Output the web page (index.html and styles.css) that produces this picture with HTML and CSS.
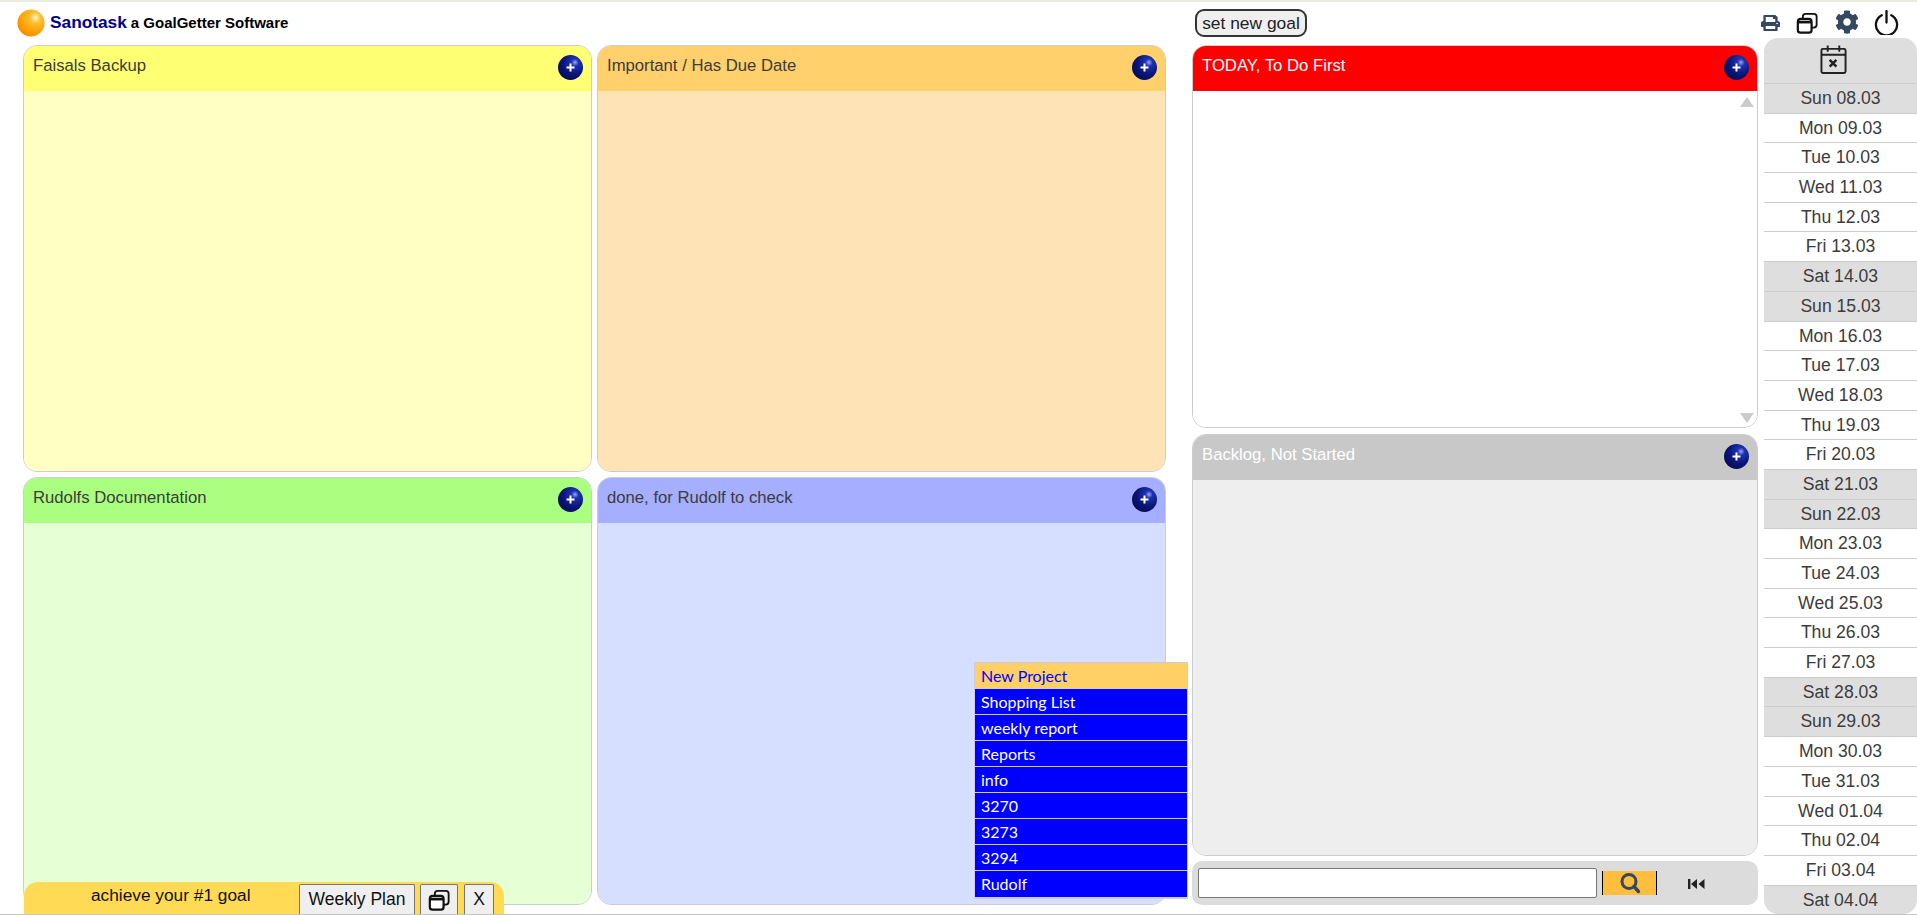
FILE: index.html
```html
<!DOCTYPE html>
<html lang="en">
<head>
<meta charset="utf-8">
<title>Sanotask</title>
<link rel="stylesheet" href="styles.css">
</head>
<body>
<svg class="defs" width="0" height="0" aria-hidden="true">
  <defs>
    <radialGradient id="ball" cx="0.68" cy="0.3" r="0.8">
      <stop offset="0" stop-color="#9aa8ff"/>
      <stop offset="0.18" stop-color="#1f33b0"/>
      <stop offset="0.6" stop-color="#0a1478"/>
      <stop offset="1" stop-color="#050c50"/>
    </radialGradient>
    <radialGradient id="sun" cx="0.66" cy="0.3" r="0.8">
      <stop offset="0" stop-color="#fff6cc"/>
      <stop offset="0.25" stop-color="#ffc030"/>
      <stop offset="0.75" stop-color="#ff9a00"/>
      <stop offset="1" stop-color="#ee8500"/>
    </radialGradient>
    <symbol id="add" viewBox="0 0 25 25">
      <circle cx="12.5" cy="12.5" r="12.5" fill="url(#ball)"/>
      <path d="M12.5 8.5v8M8.5 12.5h8" stroke="#fff" stroke-width="2"/>
    </symbol>
    <symbol id="restore" viewBox="0 0 24 24">
      <rect x="7.5" y="2" width="15" height="15" rx="3" fill="none" stroke="#111" stroke-width="2"/>
      <rect x="2" y="7.5" width="15" height="15" rx="3" fill="#fff" stroke="#111" stroke-width="2.4"/>
      <path d="M2 11h15" stroke="#111" stroke-width="3"/>
    </symbol>
  </defs>
</svg>

<header class="topbar">
  <div class="brand">
    <svg class="logo" viewBox="0 0 30 30"><circle cx="15" cy="15" r="14.5" fill="url(#sun)"/></svg>
    <div class="brand-text">
      <span class="brand-name">Sanotask</span>
      <span class="brand-tag">a GoalGetter Software</span>
    </div>
  </div>
  <button class="goal-btn">set new goal</button>
  <div class="tools">
    <svg class="tool-print" viewBox="0 0 512 512" preserveAspectRatio="none"><path fill="#34495e" d="M448 192V77.25c0-8.49-3.37-16.62-9.37-22.63L393.37 9.37c-6-6-14.14-9.37-22.63-9.37H96C78.33 0 64 14.33 64 32v160c-35.35 0-64 28.65-64 64v112c0 8.84 7.16 16 16 16h48v96c0 17.67 14.33 32 32 32h320c17.67 0 32-14.33 32-32v-96h48c8.84 0 16-7.16 16-16V256c0-35.35-28.65-64-64-64zm-64 256H128v-96h256v96zm0-224H128V64h192v48c0 8.84 7.16 16 16 16h48v96zm48 72c-13.25 0-24-10.75-24-24 0-13.26 10.75-24 24-24s24 10.74 24 24c0 13.25-10.75 24-24 24z"/></svg>
    <svg class="tool-restore"><use href="#restore"/></svg>
    <svg class="tool-gear" viewBox="0 0 512 512"><path fill="#34495e" d="M487.4 315.7l-42.6-24.6c4.3-23.2 4.3-47 0-70.2l42.6-24.6c4.9-2.8 7.1-8.6 5.5-14-11.1-35.6-30-67.8-54.7-94.6-3.8-4.1-10-5.1-14.8-2.3L380.8 110c-17.9-15.4-38.5-27.3-60.8-35.1V25.8c0-5.6-3.9-10.5-9.4-11.7-36.7-8.2-74.3-7.8-109.2 0-5.5 1.2-9.4 6.1-9.4 11.7V75c-22.2 7.9-42.8 19.8-60.8 35.1L88.7 85.5c-4.9-2.8-11-1.9-14.8 2.3-24.7 26.7-43.6 58.9-54.7 94.6-1.7 5.4.6 11.2 5.5 14L67.3 221c-4.3 23.2-4.3 47 0 70.2l-42.6 24.6c-4.9 2.8-7.1 8.6-5.5 14 11.1 35.6 30 67.8 54.7 94.6 3.8 4.1 10 5.1 14.8 2.3l42.6-24.6c17.9 15.4 38.5 27.3 60.8 35.1v49.2c0 5.6 3.9 10.5 9.4 11.7 36.7 8.2 74.3 7.8 109.2 0 5.5-1.2 9.4-6.1 9.4-11.7v-49.2c22.2-7.9 42.8-19.8 60.8-35.1l42.6 24.6c4.9 2.8 11 1.9 14.8-2.3 24.7-26.7 43.6-58.9 54.7-94.6 1.5-5.5-.7-11.3-5.6-14.1zM256 336c-44.1 0-80-35.9-80-80s35.9-80 80-80 80 35.9 80 80-35.9 80-80 80z"/></svg>
    <svg class="tool-power" viewBox="0 0 26 26"><path d="M8 5.5a11 11 0 1 0 10 0M13 1v12" fill="none" stroke="#111" stroke-width="2.4" stroke-linecap="round"/></svg>
  </div>
</header>

<main class="content">
  <section class="board">
    <article class="panel yellow"><div class="panel-head"><span>Faisals Backup</span><svg class="add"><use href="#add"/></svg></div><div class="panel-body"></div></article>
    <article class="panel orange"><div class="panel-head"><span>Important / Has Due Date</span><svg class="add"><use href="#add"/></svg></div><div class="panel-body"></div></article>
    <article class="panel green"><div class="panel-head"><span>Rudolfs Documentation</span><svg class="add"><use href="#add"/></svg></div><div class="panel-body"></div></article>
    <article class="panel blue"><div class="panel-head"><span>done, for Rudolf to check</span><svg class="add"><use href="#add"/></svg></div><div class="panel-body"></div></article>
  </section>

  <section class="side">
    <article class="panel red today"><div class="panel-head"><span>TODAY, To Do First</span><svg class="add"><use href="#add"/></svg></div><div class="panel-body"><i class="arrow up"></i><i class="arrow down"></i></div></article>
    <article class="panel gray backlog"><div class="panel-head"><span>Backlog, Not Started</span><svg class="add"><use href="#add"/></svg></div><div class="panel-body"></div></article>
    <div class="search">
      <input class="search-input" type="text" aria-label="Search">
      <button class="search-btn" aria-label="Search">
        <svg viewBox="0 0 22 22"><circle cx="10" cy="9.500" r="7" fill="none" stroke="#34495e" stroke-width="3"/><path d="M15 14.500l4.500 5" stroke="#34495e" stroke-width="3.400" stroke-linecap="round"/></svg>
      </button>
      <svg class="rewind" viewBox="0 0 17 10"><path fill="#222" d="M0 0h2.400v10H0zM9 0v10L3 5zM16.500 0v10l-6-5z"/></svg>
    </div>
  </section>

  <aside class="calendar">
    <div class="cal-head">
      <svg viewBox="0 0 28 30"><rect x="1.500" y="4" width="25" height="25" rx="1.500" fill="none" stroke="#222" stroke-width="2"/><path d="M1.500 10h25M8 0.500v6.500M20 0.500v6.500" stroke="#222" stroke-width="2" fill="none"/><path d="M10 15.500l7 7M17 15.500l-7 7" stroke="#222" stroke-width="2.600"/></svg>
    </div>
    <div class="day off">Sun 08.03</div>
    <div class="day">Mon 09.03</div>
    <div class="day">Tue 10.03</div>
    <div class="day">Wed 11.03</div>
    <div class="day">Thu 12.03</div>
    <div class="day">Fri 13.03</div>
    <div class="day off">Sat 14.03</div>
    <div class="day off">Sun 15.03</div>
    <div class="day">Mon 16.03</div>
    <div class="day">Tue 17.03</div>
    <div class="day">Wed 18.03</div>
    <div class="day">Thu 19.03</div>
    <div class="day">Fri 20.03</div>
    <div class="day off">Sat 21.03</div>
    <div class="day off">Sun 22.03</div>
    <div class="day">Mon 23.03</div>
    <div class="day">Tue 24.03</div>
    <div class="day">Wed 25.03</div>
    <div class="day">Thu 26.03</div>
    <div class="day">Fri 27.03</div>
    <div class="day off">Sat 28.03</div>
    <div class="day off">Sun 29.03</div>
    <div class="day">Mon 30.03</div>
    <div class="day">Tue 31.03</div>
    <div class="day">Wed 01.04</div>
    <div class="day">Thu 02.04</div>
    <div class="day">Fri 03.04</div>
    <div class="day off last">Sat 04.04</div>
  </aside>
</main>

<ul class="menu">
  <li class="menu-new">New Project</li>
  <li>Shopping List</li>
  <li>weekly report</li>
  <li>Reports</li>
  <li>info</li>
  <li>3270</li>
  <li>3273</li>
  <li>3294</li>
  <li>Rudolf</li>
</ul>

<div class="goalbar">
  <span class="goalbar-text">achieve your #1 goal</span>
  <button class="bar-btn plan">Weekly Plan</button>
  <button class="bar-btn icon"><svg><use href="#restore"/></svg></button>
  <button class="bar-btn close">X</button>
</div>
</body>
</html>
```

FILE: styles.css
```css
* { box-sizing: border-box; }
html { margin: 0; padding: 0; height: 915px; overflow: hidden; }
body {
  margin: 0;
  padding: 0;
  width: 1917px;
  height: 915px;
  overflow: hidden;
  position: relative;
  background: #fff;
  font-family: "Liberation Sans", Arial, sans-serif;
  color: #333;
  border-top: 2px solid #e9ece0;
  border-bottom: 1px solid #c4c4c0;
}
.defs { position: absolute; }

.topbar { height: 36px; display: flex; align-items: flex-start; }
.brand { width: 1195px; padding: 7px 0 0 17px; display: flex; align-items: flex-start; height: 36px; }
.logo { width: 28px; height: 28px; margin-right: 5px; }
.brand-text { display: flex; align-items: baseline; margin-top: 3px; line-height: 20px; }
.brand-name { font-size: 17.300px; font-weight: 700; color: #00008b; margin-right: 4px; }
.brand-tag { font-size: 15px; font-weight: 700; color: #000; }
.goal-btn {
  margin-top: 7px; width: 112px; height: 28px; padding: 0;
  border: 2px solid #333; border-radius: 9px; background: #efefef;
  font: 17.400px "Liberation Sans", Arial, sans-serif; color: #222;
}
.tools { flex: 1; height: 36px; display: flex; align-items: flex-start; padding-left: 454px; }
.tool-print { margin-top: 13px; width: 19px; height: 16px; }
.tool-restore { margin: 10px 0 0 16px; width: 22px; height: 22px; }
.tool-gear { margin: 8px 0 0 17px; width: 24px; height: 24px; }
.tool-power { margin: 8px 0 0 15px; width: 25px; height: 25px; }

.content { display: flex; align-items: flex-start; height: 876px; }
.board {
  margin: 7px 0 0 23px; width: 1143px; height: 860px;
  display: grid; grid-template-columns: 569px 569px; grid-template-rows: 427px 428px; gap: 5px;
}
.panel {
  display: flex; flex-direction: column; overflow: hidden;
  border: 1px solid #ccc; border-radius: 14px;
}
.panel-head {
  flex: none; height: 45px; display: flex; align-items: center; justify-content: space-between;
  padding: 0 8px 0 9px; font-size: 16.700px; color: #3c3c3c;
}
.panel-head span { margin-top: -6px; }
.add { width: 25px; height: 25px; margin-top: -3px; }
.panel-body { flex: 1; position: relative; }

.yellow .panel-head { background: #ffff73; } .yellow .panel-body { background: #ffffc4; }
.orange .panel-head { background: #ffd06b; } .orange .panel-body { background: #fde3b5; }
.green .panel-head { background: #aaff80; } .green .panel-body { background: #e6ffd5; }
.blue .panel-head { background: #a5aeff; } .blue .panel-body { background: #d6dfff; }
.red .panel-head { background: #f00; color: #fff; } .red .panel-body { background: #fff; }
.gray .panel-head { background: #c8c8c8; color: #fff; } .gray .panel-body { background: #eee; }

.side { margin: 7px 0 0 26px; width: 566px; height: 860px; display: flex; flex-direction: column; }
.today { height: 383px; margin-bottom: 6px; }
.backlog { height: 422px; margin-bottom: 5px; }
.arrow { position: absolute; right: 3px; width: 0; height: 0; border-left: 7px solid transparent; border-right: 7px solid transparent; }
.arrow.up { top: 6px; border-bottom: 10px solid #ccc; }
.arrow.down { bottom: 4px; border-top: 10px solid #ccc; }

.search {
  flex: 1; background: #dcdcdc; border-radius: 10px;
  display: flex; align-items: center; padding: 0 5px 0 6px;
}
.search-input { width: 399px; height: 30px; border: 1px solid #767676; border-radius: 2px; background: #fff; }
.search-btn {
  margin-left: 5px; width: 55px; height: 24px; padding: 0;
  border: 0; border-left: 1px solid #000; border-right: 1px solid #000; background: #ffbe3d;
  display: flex; align-items: center; justify-content: center;
}
.search-btn svg { width: 22px; height: 22px; }
.rewind { margin: 1px 0 0 31px; width: 17px; height: 10px; }

.calendar { margin-left: 6px; flex: 1; height: 876px; }
.cal-head {
  height: 46px; background: #dedede; border-radius: 14px 14px 0 0; border-bottom: 1px solid #ccc;
  display: flex; align-items: flex-start; padding: 7px 0 0 56px;
}
.cal-head svg { width: 27px; height: 29px; }
.day {
  height: 29.700px; line-height: 29px; text-align: center; font-size: 17.600px; color: #3c3c3c;
  border-bottom: 1px solid #ccc; background: #fff;
}
.day.off { background: #dedede; }
.day.last { height: 28px; border-bottom: 0; border-radius: 0 0 14px 14px; }

.menu {
  position: absolute; left: 974px; top: 660px; width: 214px; margin: 0; padding: 0; list-style: none;
  border: 1px solid #ccd; border-bottom-width: 2px; background: #ccd;
  font: 16px Lato, "Noto Sans", sans-serif;
}
.menu li { height: 26px; line-height: 25px; padding-left: 6px; background: #00f; color: #fff; border-bottom: 1px solid #ccd; }
.menu li:last-child { border-bottom: 0; }
.menu .menu-new { background: #ffd066; color: #00f; }

.goalbar {
  position: absolute; left: 24px; top: 880px; width: 480px; height: 32px;
  background: #ffda55; border-radius: 14px 14px 0 0; display: flex; align-items: flex-end;
}
.goalbar-text { position: absolute; left: 67px; top: 3px; font-size: 17.300px; color: #111; }
.bar-btn {
  height: 30px; padding: 0; border: 1px solid #767676; border-bottom: 0; border-radius: 2px 2px 0 0;
  background: #efefef; font: 17.500px "Liberation Sans", Arial, sans-serif; color: #111;
}
.plan { margin-left: 275px; width: 116px; }
.icon { margin-left: 5px; width: 38px; display: flex; align-items: center; justify-content: center; }
.icon svg { width: 22px; height: 22px; }
.close { margin-left: 6px; width: 30px; }
```
